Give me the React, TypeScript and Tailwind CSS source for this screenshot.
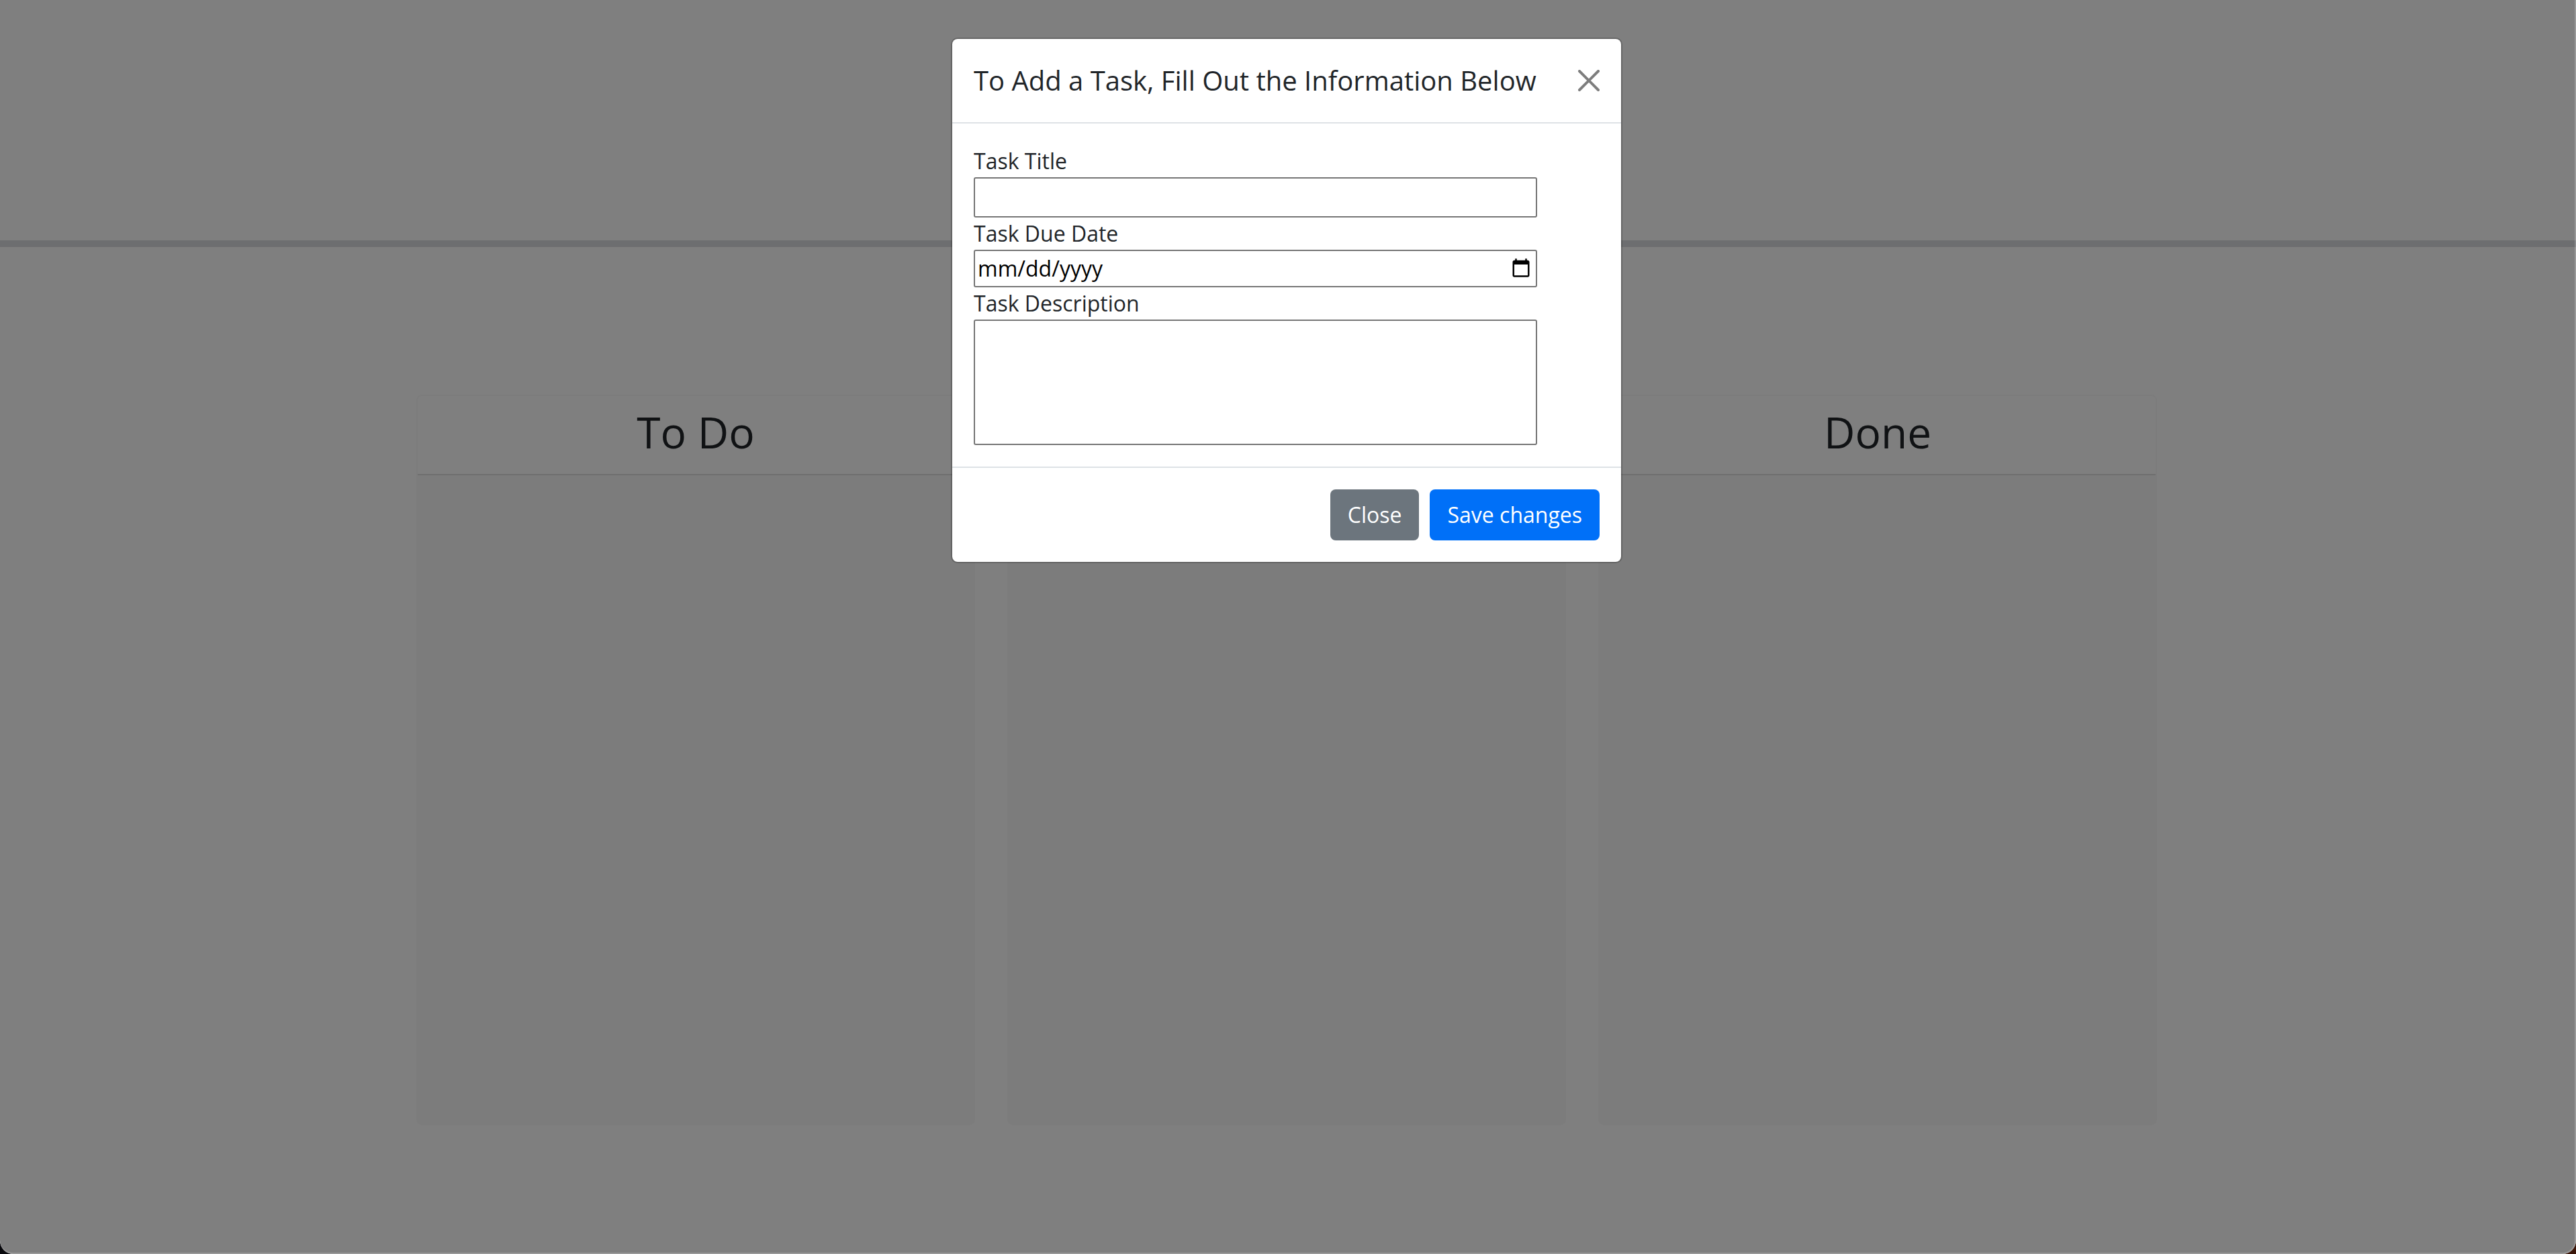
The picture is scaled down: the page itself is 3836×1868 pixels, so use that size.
import React from "react";

const columns = ["To Do", "In Progress", "Done"];

function Column({ title }: { title: string }) {
  return (
    <section className="flex flex-1 flex-col overflow-hidden rounded-lg border-2 border-[#f9f9f9] bg-[#f8f9f8]">
      <header className="border-b-2 border-[#dfdfdf] bg-white px-8 pt-4 pb-6 text-center">
        <h2 className="text-[64px] leading-[76px]">{title}</h2>
      </header>
      <div className="h-[966px]" />
    </section>
  );
}

function CloseIcon() {
  return (
    <svg viewBox="0 0 16 16" className="size-8 fill-black" aria-hidden="true">
      <path d="M.293.293a1 1 0 0 1 1.414 0L8 6.586 14.293.293a1 1 0 1 1 1.414 1.414L9.414 8l6.293 6.293a1 1 0 0 1-1.414 1.414L8 9.414l-6.293 6.293a1 1 0 0 1-1.414-1.414L6.586 8 .293 1.707a1 1 0 0 1 0-1.414z" />
    </svg>
  );
}

function TaskModal() {
  return (
    <div
      role="dialog"
      aria-labelledby="task-modal-title"
      className="w-[1000px] rounded-[10px] border-2 border-black/20 bg-white bg-clip-padding"
    >
      <div className="flex items-center justify-between border-b-2 border-[#dee2e6] p-8">
        <h5 id="task-modal-title" className="text-[40px] leading-[60px]">
          To Add a Task, Fill Out the Information Below
        </h5>
        <button type="button" aria-label="Close" className="opacity-50">
          <CloseIcon />
        </button>
      </div>
      <form id="task-form" className="flex flex-col p-8">
        <label htmlFor="task-title">Task Title</label>
        <input
          id="task-title"
          type="text"
          className="h-[60px] w-9/10 rounded-[3px] border-2 border-[#767676] px-1 text-black"
        />
        <label htmlFor="task-date">Task Due Date</label>
        <input
          id="task-date"
          type="date"
          className="h-14 w-9/10 rounded-[3px] border-2 border-[#767676] px-1 text-black [&::-webkit-datetime-edit-day-field]:p-0 [&::-webkit-datetime-edit-month-field]:p-0 [&::-webkit-datetime-edit-year-field]:p-0"
        />
        <label htmlFor="task-description">Task Description</label>
        <textarea
          id="task-description"
          className="h-[187px] w-9/10 resize-none rounded-[3px] border-2 border-[#767676] p-1 text-black"
        />
      </form>
      <div className="flex justify-end gap-4 border-t-2 border-[#dee2e6] p-8">
        <button type="button" className="rounded-lg bg-[#6c757d] px-[26px] py-[14px] text-white">
          Close
        </button>
        <button type="button" className="rounded-lg bg-[#0070f8] px-[26px] py-[14px] text-white">
          Save changes
        </button>
      </div>
    </div>
  );
}

export default function App() {
  return (
    <div className="min-h-screen bg-linear-to-r from-[#08080c] to-[#3a1508] font-['Open_Sans',sans-serif] text-[32px] leading-[48px] text-[#212529]">
      <div className="relative min-h-screen overflow-hidden rounded-b-[20px] bg-white">
        <div className="h-[368px] border-b-[10px] border-[#dadce0]" />
        <main className="pt-[220px] pr-1">
          <div className="mx-auto flex max-w-[2592px] gap-12">
            {columns.map((title) => (
              <Column key={title} title={title} />
            ))}
          </div>
        </main>
        <div className="absolute inset-0 flex items-start justify-center rounded-b-[20px] border-r-2 border-b-2 border-white/20 bg-black/50 pt-14 pr-[2px]">
          <TaskModal />
        </div>
      </div>
    </div>
  );
}
